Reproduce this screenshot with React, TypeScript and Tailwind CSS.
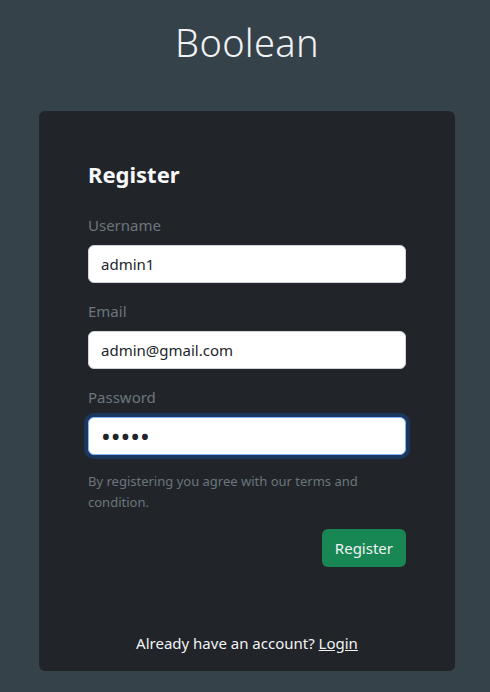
const App = () => {
  return (
    <div className="min-h-screen w-full bg-[#36424a] font-['Noto_Sans',sans-serif] flex flex-col items-center pl-[4px]">
      <h1 className="mt-[17px] text-[38px] leading-[50px] font-light text-[#f1f3f5] tracking-[0.3px]">
        Boolean
      </h1>

      <div className="mt-[44px] w-[416px] h-[560px] bg-[#212529] rounded-[6px] px-[49px] pt-[47px] flex flex-col">
        <h2 className="text-[22px] leading-[32px] font-bold text-[#f8f9fa]">Register</h2>

        <form className="mt-[23px] flex flex-col" onSubmit={(e) => e.preventDefault()}>
          <label className="text-[15px] leading-[24px] text-[#6c757d] mb-[8px]">Username</label>
          <input
            type="text"
            defaultValue="admin1"
            className="h-[38px] w-full rounded-[6px] bg-white border border-[#ced4da] px-[12px] text-[15px] text-[#212529] outline-none"
          />

          <label className="mt-[16px] text-[15px] leading-[24px] text-[#6c757d] mb-[8px]">Email</label>
          <input
            type="email"
            defaultValue="admin@gmail.com"
            className="h-[38px] w-full rounded-[6px] bg-white border border-[#ced4da] px-[12px] text-[15px] text-[#212529] outline-none"
          />

          <label className="mt-[16px] text-[15px] leading-[24px] text-[#6c757d] mb-[8px]">Password</label>
          <input
            type="password"
            defaultValue="admin"
            className="h-[38px] w-full rounded-[6px] bg-white border border-[#86b7fe] px-[12px] text-[26px] leading-[36px] text-[#212529] outline-none shadow-[0_0_0_4px_rgba(13,110,253,0.25)]"
          />

          <p className="mt-[16px] text-[13px] leading-[21px] text-[#6c757d]">
            By registering you agree with our terms and condition.
          </p>

          <div className="mt-[16px] flex justify-end">
            <button
              type="submit"
              className="h-[38px] px-[13px] rounded-[6px] bg-[#198754] text-[15px] text-[#f1f3f5]"
            >
              Register
            </button>
          </div>
        </form>

        <p className="mt-auto mb-[16px] text-center text-[15px] leading-[24px] text-[#f1f3f5]">
          Already have an account? <a href="#" className="underline">Login</a>
        </p>
      </div>
    </div>
  );
};

export default App;
